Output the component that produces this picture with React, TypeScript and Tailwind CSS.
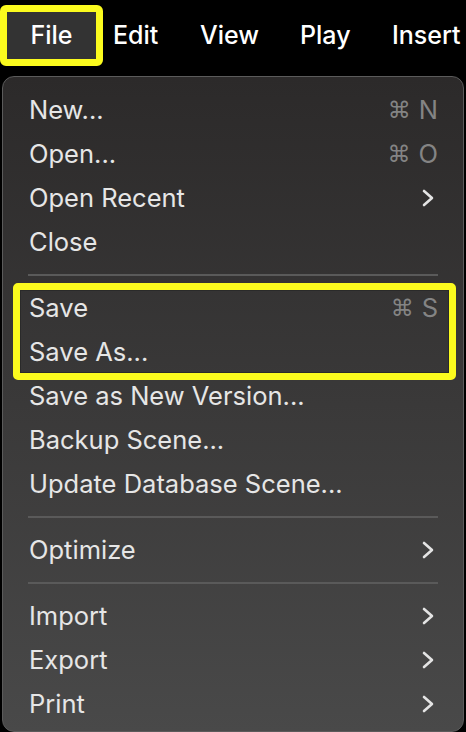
import React from "react";

type Item =
  | { kind: "item"; label: string; shortcut?: string; sub?: boolean }
  | { kind: "sep" };

const top: Item[] = [
  { kind: "item", label: "New...", shortcut: "N" },
  { kind: "item", label: "Open...", shortcut: "O" },
  { kind: "item", label: "Open Recent", sub: true },
  { kind: "item", label: "Close" },
  { kind: "sep" },
];

const saveItems: Item[] = [
  { kind: "item", label: "Save", shortcut: "S" },
  { kind: "item", label: "Save As..." },
];

const rest: Item[] = [
  { kind: "item", label: "Save as New Version..." },
  { kind: "item", label: "Backup Scene..." },
  { kind: "item", label: "Update Database Scene..." },
  { kind: "sep" },
  { kind: "item", label: "Optimize", sub: true },
  { kind: "sep" },
  { kind: "item", label: "Import", sub: true },
  { kind: "item", label: "Export", sub: true },
  { kind: "item", label: "Print", sub: true },
];

function Chevron() {
  return (
    <svg width="14" height="20" viewBox="0 0 14 20" className="mr-[3px]">
      <polyline
        points="3,3 11,10 3,17"
        fill="none"
        stroke="#e4e4e4"
        strokeWidth="2.6"
        strokeLinecap="round"
        strokeLinejoin="round"
      />
    </svg>
  );
}

function Row({ item }: { item: Item }) {
  if (item.kind === "sep") {
    return (
      <div className="flex h-[22px] items-center px-[25px]">
        <div className="h-[2px] w-full bg-[#5a5a5a]" />
      </div>
    );
  }
  return (
    <div className="flex h-[44px] items-center justify-between pl-[26px] pr-[25px] text-[25.5px] text-[#e6e6e6]">
      <span>{item.label}</span>
      {item.shortcut ? (
        <span className="flex items-center gap-[8px] text-[#848484]">
          <span className="font-['DejaVu_Sans'] text-[23px]">⌘</span>
          <span>{item.shortcut}</span>
        </span>
      ) : null}
      {item.sub ? <Chevron /> : null}
    </div>
  );
}

export default function App() {
  return (
    <div className="h-[732px] w-[466px] overflow-hidden bg-black font-['Inter','Liberation_Sans',sans-serif]">
      {/* menu bar */}
      <div className="flex h-[76px] items-start pt-[5px] text-[25px] font-medium text-white">
        <div className="flex h-[61px] w-[103px] items-center justify-center rounded-[6px] border-[7px] border-[#fbfb1e] bg-[#333333]">
          File
        </div>
        <div className="flex h-[61px] items-center">
          <span className="ml-[10px] w-[87px]">Edit</span>
          <span className="w-[100px]">View</span>
          <span className="w-[92px]">Play</span>
          <span>Insert</span>
        </div>
      </div>

      {/* dropdown */}
      <div className="mx-[2px] h-[656px] rounded-[12px] border border-[#5b5b5b] bg-gradient-to-b from-[#2c2a2a] via-[#3a3939] to-[#494949] pt-[11px]">
        {top.map((it, i) => (
          <Row key={"t" + i} item={it} />
        ))}
        <div className="relative">
          {saveItems.map((it, i) => (
            <Row key={"s" + i} item={it} />
          ))}
          <div className="pointer-events-none absolute -top-[3px] -bottom-[6px] left-[10px] right-[7px] rounded-[5px] border-[7px] border-[#fbfb1e] shadow-[inset_0_0_0_1px_#2a2a2a]" />
        </div>
        {rest.map((it, i) => (
          <Row key={"r" + i} item={it} />
        ))}
      </div>
    </div>
  );
}
